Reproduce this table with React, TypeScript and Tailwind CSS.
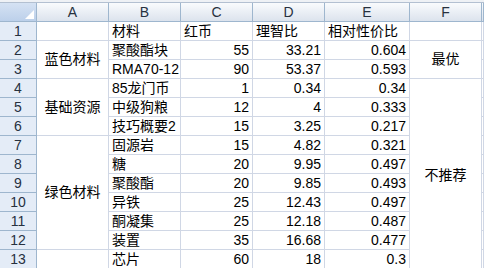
import React from 'react';

type Row = { name: string; red: string; ratio: string; value: string };

const rows: Row[] = [
  { name: '聚酸酯块', red: '55', ratio: '33.21', value: '0.604' },
  { name: 'RMA70-12', red: '90', ratio: '53.37', value: '0.593' },
  { name: '85龙门币', red: '1', ratio: '0.34', value: '0.34' },
  { name: '中级狗粮', red: '12', ratio: '4', value: '0.333' },
  { name: '技巧概要2', red: '15', ratio: '3.25', value: '0.217' },
  { name: '固源岩', red: '15', ratio: '4.82', value: '0.321' },
  { name: '糖', red: '20', ratio: '9.95', value: '0.497' },
  { name: '聚酸酯', red: '20', ratio: '9.85', value: '0.493' },
  { name: '异铁', red: '25', ratio: '12.43', value: '0.497' },
  { name: '酮凝集', red: '25', ratio: '12.18', value: '0.487' },
  { name: '装置', red: '35', ratio: '16.68', value: '0.477' },
  { name: '芯片', red: '60', ratio: '18', value: '0.3' },
];

// merged cells in column A, keyed by sheet row
const groupA: Record<number, { label: string; span: string }> = {
  2: { label: '蓝色材料', span: 'row-span-2' },
  4: { label: '基础资源', span: 'row-span-3' },
  7: { label: '绿色材料', span: 'row-span-6' },
  13: { label: '', span: '' },
};

const groupF: Record<number, { label: string; span: string }> = {
  2: { label: '最优', span: 'row-span-2' },
  4: { label: '不推荐', span: 'row-span-10 pt-[3px]' },
};

const cell = 'border-r border-b border-[#d0d7e5] flex items-center overflow-hidden whitespace-nowrap';
const rowHead =
  'border-r border-b border-[#9eb6ce] bg-[#e4ecf7] flex items-center justify-center text-[#27313f]';
const colHead =
  'border-r border-b border-[#9eb6ce] bg-linear-to-b from-[#f9fbfd] to-[#dce3ed] flex items-center justify-center text-[#27313f]';

export default function App() {
  return (
    <div
      className="h-[268px] w-[484px] overflow-hidden bg-white text-[14px] text-black"
      style={{ fontFamily: '"Liberation Sans", "Noto Sans CJK SC", sans-serif' }}
    >
      <div className="h-[3px] border-b border-[#b3c0d1] bg-[#eef1f5]" />
      <div className="grid grid-cols-[37px_72px_72px_72px_72px_85px_72px_1fr] auto-rows-[19px]">
        {/* column headers */}
        <div className="relative border-r border-b border-[#9eb6ce] bg-linear-to-b from-[#d5e2f3] to-[#bcd0ea]">
          <svg className="absolute right-[2px] bottom-[2px]" width="9" height="9" viewBox="0 0 9 9">
            <polygon points="9,0 9,9 0,9" fill="#ffffff" />
          </svg>
        </div>
        {['A', 'B', 'C', 'D', 'E', 'F', ''].map((c, i) => (
          <div key={i} className={colHead}>
            {c}
          </div>
        ))}

        {/* row 1 */}
        <div className={rowHead}>1</div>
        <div className={cell} />
        <div className={`${cell} pl-[3px]`}>材料</div>
        <div className={`${cell} pl-[3px]`}>红币</div>
        <div className={`${cell} pl-[3px]`}>理智比</div>
        <div className={`${cell} pl-[3px]`}>相对性价比</div>
        <div className={cell} />
        <div className={cell} />

        {rows.map((r, i) => {
          const n = i + 2;
          const a = groupA[n];
          const f = groupF[n];
          return (
            <React.Fragment key={n}>
              <div className={rowHead}>{n}</div>
              {a && <div className={`${cell} ${a.span} justify-center`}>{a.label}</div>}
              <div className={`${cell} pl-[3px]`}>{r.name}</div>
              <div className={`${cell} justify-end pr-[3px]`}>{r.red}</div>
              <div className={`${cell} justify-end pr-[3px]`}>{r.ratio}</div>
              <div className={`${cell} justify-end pr-[3px]`}>{r.value}</div>
              {f && <div className={`${cell} ${f.span} justify-center`}>{f.label}</div>}
              <div className={cell} />
            </React.Fragment>
          );
        })}
      </div>
    </div>
  );
}
